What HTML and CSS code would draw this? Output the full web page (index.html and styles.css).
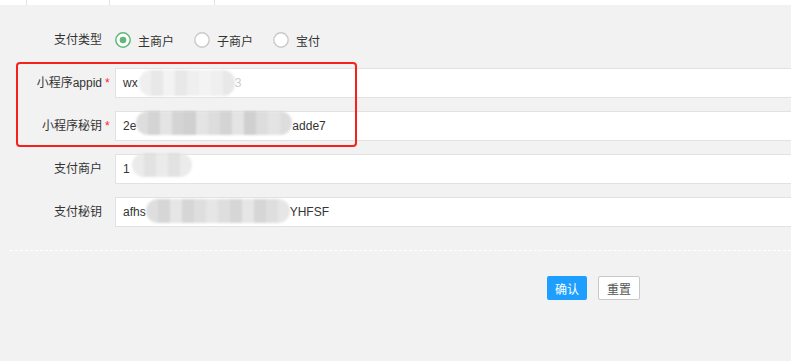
FILE: index.html
```html
<!DOCTYPE html>
<html>
<head>
<meta charset="utf-8">
<title>支付设置</title>
<link rel="stylesheet" href="styles.css">
</head>
<body>

<div class="tabs">
	<span class="tab t1"></span>
	<span class="tab t2"></span>
	<span class="tab t3"></span>
	<span class="tab t4"></span>
</div>

<form class="form">

	<div class="item">
		<label class="label">支付类型</label><span class="req"></span>
		<div class="block radios">
			<span class="radio">
				<svg width="16" height="16" viewBox="0 0 16 16"><circle cx="8" cy="8" r="7.2" fill="#fff" stroke="#5fb878" stroke-width="1.5"/><circle cx="8" cy="8" r="3.3" fill="#5fb878"/></svg>
				主商户
			</span>
			<span class="radio">
				<svg width="16" height="16" viewBox="0 0 16 16"><circle cx="8" cy="8" r="7.2" fill="#fff" stroke="#c9c9c9" stroke-width="1.4"/></svg>
				子商户
			</span>
			<span class="radio">
				<svg width="16" height="16" viewBox="0 0 16 16"><circle cx="8" cy="8" r="7.2" fill="#fff" stroke="#c9c9c9" stroke-width="1.4"/></svg>
				宝付
			</span>
		</div>
	</div>

	<div class="item">
		<label class="label">小程序appid</label><span class="req">*</span>
		<div class="block input">wx<span class="mosaic m1"><i></i><i></i><i></i><i></i><i></i><i></i><i></i><i></i></span><span class="faint">3</span></div>
	</div>

	<div class="item">
		<label class="label">小程序秘钥</label><span class="req">*</span>
		<div class="block input">2e<span class="mosaic m2"><i></i><i></i><i></i><i></i><i></i><i></i><i></i><i></i><i></i><i></i><i></i><i></i><i></i></span>adde7</div>
	</div>

	<div class="item">
		<label class="label">支付商户</label><span class="req"></span>
		<div class="block input">1<span class="mosaic m3"><i></i><i></i><i></i><i></i><i></i></span></div>
	</div>

	<div class="item">
		<label class="label">支付秘钥</label><span class="req"></span>
		<div class="block input">afhs<span class="mosaic m4"><i></i><i></i><i></i><i></i><i></i><i></i><i></i><i></i><i></i><i></i><i></i><i></i></span>YHFSF</div>
	</div>

	<div class="dash"></div>

	<div class="actions">
		<button type="button" class="btn btn-blue">确认</button>
		<button type="button" class="btn btn-plain">重置</button>
	</div>

	<div class="mark"></div>
</form>

</body>
</html>
```

FILE: styles.css
```css
html, body {
	margin: 0;
	padding: 0;
}

body {
	background-color: #f2f2f2;
	font-family: "Liberation Sans", "Noto Sans CJK SC", sans-serif;
	font-size: 12px;
	color: #333;
	overflow: hidden;
	height: 361px;
}

/* strip of tabs at the top */
.tabs {
	display: flex;
	height: 5px;
	background-color: #fff;
}

.tab {
	display: block;
	height: 5px;
	border-right: 1px solid #e2e2e2;
}

.t1 { width: 26px; }
.t2 { width: 82px; }
.t3 { width: 104px; }
.t4 { flex: 1; border-right: none; }

.form {
	position: relative;
	margin: 0;
	padding-top: 20px;
}

.item {
	display: flex;
	align-items: center;
	height: 30px;
	margin-bottom: 13px;
}

.label {
	width: 102px;
	text-align: right;
	line-height: 30px;
	color: #333;
}

.req {
	width: 13px;
	padding-left: 3px;
	box-sizing: border-box;
	color: #f22;
	line-height: 30px;
}

.block {
	flex: 1;
}

.radios {
	display: flex;
	align-items: center;
	height: 30px;
}

.radio {
	display: flex;
	align-items: center;
	margin-right: 20px;
	color: #333;
}

.radio svg {
	margin-right: 7px;
}

.input {
	height: 30px;
	box-sizing: border-box;
	background-color: #fff;
	border: 1px solid #e2e2e2;
	border-right: none;
	padding-left: 7px;
	display: flex;
	align-items: center;
	color: #333;
	white-space: nowrap;
}

.faint {
	color: #ccc;
}

/* blurred values */
.mosaic {
	display: inline-flex;
	height: 24px;
	border-radius: 12px;
	overflow: hidden;
	filter: blur(0.8px);
	opacity: 0.85;
}

.mosaic i {
	display: block;
	width: 12px;
	height: 24px;
	background-color: #e4e4e4;
}

.m1 { margin-left: 1px; height: 26px; }
.m1 i { height: 26px; background-color: #ededed; }
.m1 i:nth-child(2n) { background-color: #e4e4e4; }
.m1 i:nth-child(3n) { background-color: #f1f1f1; }

.m2 { margin-left: 0; margin-top: -6px; }
.m2 i { background-color: #d8d8d8; }
.m2 i:nth-child(2n) { background-color: #cdcdcd; }
.m2 i:nth-child(3n) { background-color: #e0e0e0; }
.m2 i:nth-child(5n) { background-color: #c8c8c8; }

.m3 { margin-left: 2px; margin-top: -8px; }
.m3 i { background-color: #e8e8e8; }
.m3 i:nth-child(2n) { background-color: #dedede; }

.m4 { margin-left: 0; margin-top: -2px; }
.m4 i { background-color: #d9d9d9; }
.m4 i:nth-child(2n) { background-color: #cfcfcf; }
.m4 i:nth-child(3n) { background-color: #e2e2e2; }

.dash {
	margin: 23px 0 0 10px;
	border-top: 1px dashed #fff;
}

.actions {
	display: flex;
	padding-left: 547px;
	margin-top: 25px;
}

.btn {
	height: 24px;
	padding: 0 8px;
	font-family: "Noto Sans CJK SC", sans-serif;
	font-size: 12px;
	border-radius: 2px;
	margin-right: 11px;
	cursor: pointer;
}

.btn-blue {
	background-color: #1e9fff;
	color: #fff;
	border: none;
	width: 40px;
	padding: 0;
}

.btn-plain {
	background-color: #fff;
	color: #555;
	border: 1px solid #c9c9c9;
	width: 42px;
	padding: 0;
}

/* red annotation frame */
.mark {
	position: absolute;
	left: 16px;
	top: 57px;
	width: 341px;
	height: 85px;
	box-sizing: border-box;
	border: 2px solid #f5221b;
	border-radius: 4px;
}
```
